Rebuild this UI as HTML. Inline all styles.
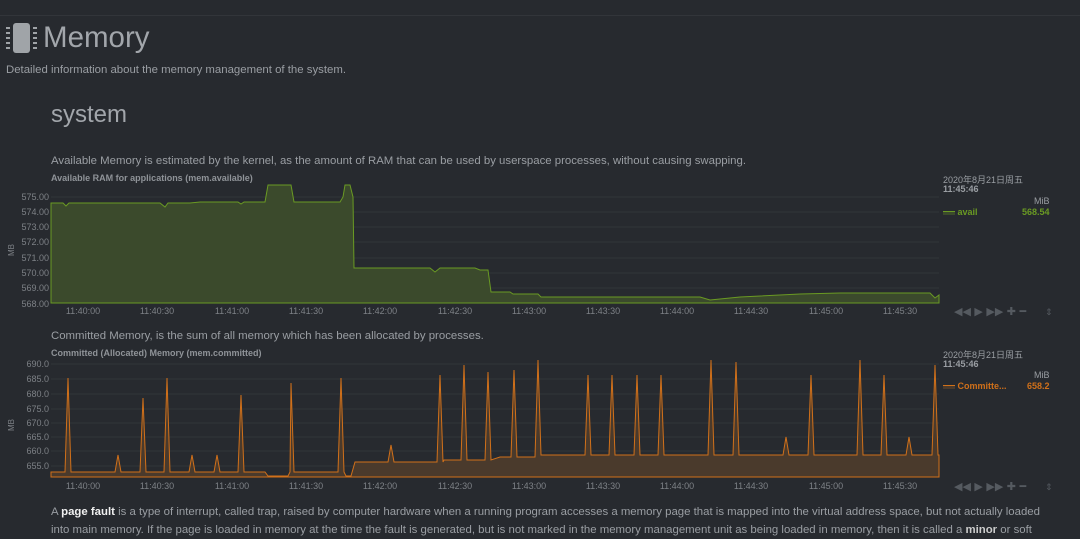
<!DOCTYPE html>
<html><head><meta charset="utf-8"><style>
body{margin:0;width:1080px;height:529px;overflow:hidden;background:#272a2f;font-family:"Liberation Sans","Noto Sans CJK SC",sans-serif;color:#9a9ea3;position:relative}
.a{position:absolute;white-space:nowrap}
.yl{font-size:9px;color:#7d8186;text-align:right;width:40px;left:9px}
.xl{font-size:9px;color:#7d8186;width:60px;text-align:center}
.ct{font-size:9px;font-weight:bold;color:#8f9398}
</style></head><body>
<div class="a" style="top:15px;left:0;width:1080px;border-top:1px solid #32353a"></div>
<svg class="a" style="left:5px;top:23px" width="32" height="30" viewBox="0 0 32 30">
<rect x="8" y="0" width="17" height="30" rx="3" fill="#a0a4a8"/>
<g fill="#a0a4a8"><rect x="1" y="4" width="4" height="2"/><rect x="1" y="9" width="4" height="2"/><rect x="1" y="14" width="4" height="2"/><rect x="1" y="19" width="4" height="2"/><rect x="1" y="24" width="4" height="2"/><rect x="28" y="4" width="4" height="2"/><rect x="28" y="9" width="4" height="2"/><rect x="28" y="14" width="4" height="2"/><rect x="28" y="19" width="4" height="2"/><rect x="28" y="24" width="4" height="2"/></g></svg>
<div class="a" style="left:43px;top:21px;font-size:29.5px;color:#a2a6ab">Memory</div>
<div class="a" style="left:6px;top:64px;font-size:11.4px">Detailed information about the memory management of the system.</div>
<div class="a" style="left:51px;top:101px;font-size:24px;color:#a2a6ab">system</div>
<div class="a" style="left:51px;top:155px;font-size:11.4px">Available Memory is estimated by the kernel, as the amount of RAM that can be used by userspace processes, without causing swapping.</div>
<div class="a ct" style="left:51px;top:173px">Available RAM for applications (mem.available)</div>
<svg class="a" style="left:0;top:0" width="1080" height="529">
<g stroke="#31353a" stroke-width="1">
<line x1="51" y1="197" x2="939" y2="197"/><line x1="51" y1="212" x2="939" y2="212"/><line x1="51" y1="227" x2="939" y2="227"/><line x1="51" y1="242" x2="939" y2="242"/><line x1="51" y1="258" x2="939" y2="258"/><line x1="51" y1="273" x2="939" y2="273"/><line x1="51" y1="288" x2="939" y2="288"/>
<line x1="51" y1="364" x2="939" y2="364"/><line x1="51" y1="379" x2="939" y2="379"/><line x1="51" y1="394" x2="939" y2="394"/><line x1="51" y1="409" x2="939" y2="409"/><line x1="51" y1="423" x2="939" y2="423"/><line x1="51" y1="437" x2="939" y2="437"/><line x1="51" y1="451" x2="939" y2="451"/><line x1="51" y1="466" x2="939" y2="466"/>
</g>
<polygon fill="#3b4a2c" stroke="#6a9a23" stroke-width="1" points="51,203 63,203 66,206 69,203 160,203 165,207 168,203 190,203 200,202 238,202 241,204 244,202 265,202 268,185 291,185 294,202 340,202 343,197 345,185 350,185 353,197 354,268 430,268 435,272 440,268 475,268 480,270 488,270 491,292 510,292 513,294 538,294 541,297 700,297 710,300 740,297 800,294 840,293 930,293 935,298 939,295 939,303 51,303"/>
<polygon fill="#4a3a2c" stroke="#d0701a" stroke-width="1" points="51,472 65,472 68,378 71,472 115,472 118,455 121,472 140,472 143,398 146,472 164,472 167,378 170,472 189,472 192,455 195,472 214,472 217,455 220,472 238,472 241,395 244,472 265,472 268,476 288,476 290,472 291,383 294,472 338,472 341,378 344,472 346,476 351,476 355,462 388,462 391,445 394,462 437,462 440,375 443,462 444,460 461,460 464,365 467,460 485,460 488,372 491,460 500,457 511,457 514,370 517,457 535,457 538,360 541,455 585,455 588,375 591,455 609,455 612,375 615,455 634,455 637,375 640,455 658,455 661,375 664,455 708,455 711,360 714,455 733,455 736,362 739,455 783,455 786,437 789,455 808,455 811,375 814,455 857,455 860,360 863,455 881,455 884,375 887,455 906,455 909,437 912,455 932,455 935,365 938,455 939,455 939,477 51,477"/>
<g fill="#555a60" font-size="11" font-family="DejaVu Sans,sans-serif">
<text x="954" y="315">◀◀ ▶ ▶▶ ✚ ━</text><text x="1045" y="315" font-size="9">⇕</text>
<text x="954" y="490">◀◀ ▶ ▶▶ ✚ ━</text><text x="1045" y="490" font-size="9">⇕</text>
</g>
<text x="14" y="250" font-size="8" fill="#7d8186" transform="rotate(-90 14 250)" text-anchor="middle">MB</text>
<text x="14" y="425" font-size="8" fill="#7d8186" transform="rotate(-90 14 425)" text-anchor="middle">MB</text>
</svg>
<div class="a yl" style="top:192px">575.00</div><div class="a yl" style="top:207px">574.00</div><div class="a yl" style="top:222px">573.00</div><div class="a yl" style="top:237px">572.00</div><div class="a yl" style="top:253px">571.00</div><div class="a yl" style="top:268px">570.00</div><div class="a yl" style="top:283px">569.00</div><div class="a yl" style="top:299px">568.00</div>
<div class="a yl" style="top:359px">690.0</div><div class="a yl" style="top:374px">685.0</div><div class="a yl" style="top:389px">680.0</div><div class="a yl" style="top:404px">675.0</div><div class="a yl" style="top:418px">670.0</div><div class="a yl" style="top:432px">665.0</div><div class="a yl" style="top:446px">660.0</div><div class="a yl" style="top:461px">655.0</div>
<div class="a xl" style="top:306px;left:53px">11:40:00</div><div class="a xl" style="top:306px;left:127px">11:40:30</div><div class="a xl" style="top:306px;left:202px">11:41:00</div><div class="a xl" style="top:306px;left:276px">11:41:30</div><div class="a xl" style="top:306px;left:350px">11:42:00</div><div class="a xl" style="top:306px;left:425px">11:42:30</div><div class="a xl" style="top:306px;left:499px">11:43:00</div><div class="a xl" style="top:306px;left:573px">11:43:30</div><div class="a xl" style="top:306px;left:647px">11:44:00</div><div class="a xl" style="top:306px;left:721px">11:44:30</div><div class="a xl" style="top:306px;left:796px">11:45:00</div><div class="a xl" style="top:306px;left:870px">11:45:30</div>
<div class="a xl" style="top:481px;left:53px">11:40:00</div><div class="a xl" style="top:481px;left:127px">11:40:30</div><div class="a xl" style="top:481px;left:202px">11:41:00</div><div class="a xl" style="top:481px;left:276px">11:41:30</div><div class="a xl" style="top:481px;left:350px">11:42:00</div><div class="a xl" style="top:481px;left:425px">11:42:30</div><div class="a xl" style="top:481px;left:499px">11:43:00</div><div class="a xl" style="top:481px;left:573px">11:43:30</div><div class="a xl" style="top:481px;left:647px">11:44:00</div><div class="a xl" style="top:481px;left:721px">11:44:30</div><div class="a xl" style="top:481px;left:796px">11:45:00</div><div class="a xl" style="top:481px;left:870px">11:45:30</div>
<div class="a" style="left:943px;top:173px;font-size:9px;color:#9a9ea3">2020年8月21日周五</div>
<div class="a" style="left:943px;top:184px;font-size:9px;font-weight:bold;color:#9a9ea3">11:45:46</div>
<div class="a" style="left:1034px;top:196px;font-size:9px">MiB</div>
<div class="a" style="left:943px;top:207px;font-size:9px;font-weight:bold;color:#6a9a23"><span style="display:inline-block;width:12px;height:3px;background:#3b4a2c;border-top:1px solid #6a9a23;vertical-align:middle"></span> avail</div>
<div class="a" style="left:1022px;top:207px;font-size:9px;font-weight:bold;color:#6a9a23">568.54</div>
<div class="a" style="left:51px;top:330px;font-size:11.4px">Committed Memory, is the sum of all memory which has been allocated by processes.</div>
<div class="a ct" style="left:51px;top:348px">Committed (Allocated) Memory (mem.committed)</div>
<div class="a" style="left:943px;top:348px;font-size:9px">2020年8月21日周五</div>
<div class="a" style="left:943px;top:359px;font-size:9px;font-weight:bold">11:45:46</div>
<div class="a" style="left:1034px;top:370px;font-size:9px">MiB</div>
<div class="a" style="left:943px;top:381px;font-size:9px;font-weight:bold;color:#d0701a"><span style="display:inline-block;width:12px;height:3px;background:#4a3a2c;border-top:1px solid #d0701a;vertical-align:middle"></span> Committe...</div>
<div class="a" style="left:1027px;top:381px;font-size:9px;font-weight:bold;color:#d0701a">658.2</div>
<div class="a" style="left:51px;top:503px;width:1029px;overflow:hidden;font-size:11.4px;line-height:18px">A <b style="color:#f0f0f0">page fault</b> is a type of interrupt, called trap, raised by computer hardware when a running program accesses a memory page that is mapped into the virtual address space, but not actually loaded<br>into main memory. If the page is loaded in memory at the time the fault is generated, but is not marked in the memory management unit as being loaded in memory, then it is called a <b style="color:#ccc">minor</b> or soft</div>
</body></html>
